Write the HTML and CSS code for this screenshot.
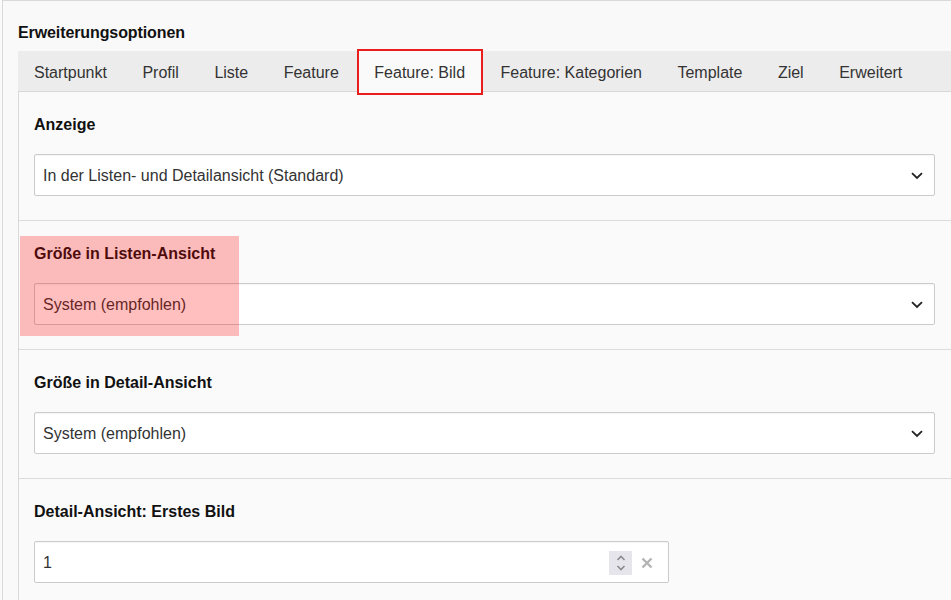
FILE: index.html
```html
<!DOCTYPE html>
<html lang="de">
<head>
<meta charset="utf-8">
<title>Erweiterungsoptionen</title>
<link rel="stylesheet" href="styles.css">
</head>
<body>
<div class="frame">
  <h2 class="title">Erweiterungsoptionen</h2>
  <div class="tabs">
    <div class="tab">Startpunkt</div>
    <div class="tab">Profil</div>
    <div class="tab">Liste</div>
    <div class="tab">Feature</div>
    <div class="tab active">Feature: Bild</div>
    <div class="tab">Feature: Kategorien</div>
    <div class="tab">Template</div>
    <div class="tab">Ziel</div>
    <div class="tab">Erweitert</div>
  </div>
  <div class="panel">
    <div class="section">
      <div class="label">Anzeige</div>
      <div class="select">
        <span class="value">In der Listen- und Detailansicht (Standard)</span>
        <svg class="chev" width="12" height="8" viewBox="0 0 12 8"><path d="M1 1.2 L6 6 L11 1.2" fill="none" stroke="#222" stroke-width="1.8"/></svg>
      </div>
    </div>
    <div class="section highlighted">
      <div class="label">Größe in Listen-Ansicht</div>
      <div class="select">
        <span class="value">System (empfohlen)</span>
        <svg class="chev" width="12" height="8" viewBox="0 0 12 8"><path d="M1 1.2 L6 6 L11 1.2" fill="none" stroke="#222" stroke-width="1.8"/></svg>
      </div>
      <div class="mark"></div>
    </div>
    <div class="section">
      <div class="label">Größe in Detail-Ansicht</div>
      <div class="select">
        <span class="value">System (empfohlen)</span>
        <svg class="chev" width="12" height="8" viewBox="0 0 12 8"><path d="M1 1.2 L6 6 L11 1.2" fill="none" stroke="#222" stroke-width="1.8"/></svg>
      </div>
    </div>
    <div class="section">
      <div class="label">Detail-Ansicht: Erstes Bild</div>
      <div class="number">
        <span class="value">1</span>
        <div class="spinner">
          <svg width="10" height="18" viewBox="0 0 10 18"><path d="M1.5 6 L5 2.5 L8.5 6 M1.5 12 L5 15.5 L8.5 12" fill="none" stroke="#8a8a8f" stroke-width="1.6"/></svg>
        </div>
        <svg class="clear" width="12" height="12" viewBox="0 0 12 12"><path d="M1.5 1.5 L10.5 10.5 M10.5 1.5 L1.5 10.5" fill="none" stroke="#b4b4b4" stroke-width="2.4"/></svg>
      </div>
    </div>
  </div>
</div>
</body>
</html>
```

FILE: styles.css
```css
html, body {
  margin: 0;
  padding: 0;
  overflow: hidden;
  background: #fafafa;
}
body {
  font-family: "Liberation Sans", Arial, sans-serif;
  color: #333;
  font-size: 16px;
}
.frame {
  margin-left: 2px;
  border-left: 1px solid #d9d9d9;
  border-top: 1px solid #d9d9d9;
  background: #f9f9f9;
  padding: 22px 0 0 15px;
  height: 700px;
}
.title {
  margin: 0 0 8px;
  font-size: 16px;
  line-height: 20px;
  font-weight: bold;
  color: #111;
  letter-spacing: -0.1px;
}
.tabs {
  display: flex;
  height: 40px;
  background: #ececec;
  border-bottom: 1px solid #d8d8d8;
}
.tab {
  padding: 3px 17.75px 0;
  line-height: 37px;
  color: #333;
  white-space: nowrap;
}
.tab:first-child {
  padding-left: 16px;
}
.tab.active {
  position: relative;
  background: #fafafa;
  height: 38px;
}
.tab.active::after {
  content: "";
  position: absolute;
  left: 0;
  right: 0;
  top: -2px;
  bottom: -3px;
  border: 2px solid #ea1c1c;
}
.panel {
  border-left: 1px solid #d9d9d9;
  background: #fafafa;
}
.section {
  position: relative;
  padding: 23px 16px 24px 15px;
  border-bottom: 1px solid #dcdcdc;
}
.label {
  font-weight: bold;
  line-height: 20px;
  color: #111;
  margin-bottom: 19px;
}
.select, .number {
  display: flex;
  align-items: center;
  height: 42px;
  box-sizing: border-box;
  border: 1px solid #cbcbcb;
  border-radius: 2px;
  background: #fff;
  padding: 1px 11px 0 8px;
  box-shadow: inset 0 1px 1px rgba(0,0,0,0.04);
}
.value {
  flex: 1;
  color: #333;
}
.chev {
  display: block;
}
.number {
  width: 635px;
  padding-right: 15px;
}
.spinner {
  width: 23px;
  height: 24px;
  background: #e6e5eb;
  display: flex;
  align-items: center;
  justify-content: center;
  margin-right: 9px;
}
.clear {
  display: block;
}
.mark {
  position: absolute;
  left: 1px;
  top: 15px;
  width: 219px;
  height: 100px;
  background: rgba(255, 0, 0, 0.25);
}
```
